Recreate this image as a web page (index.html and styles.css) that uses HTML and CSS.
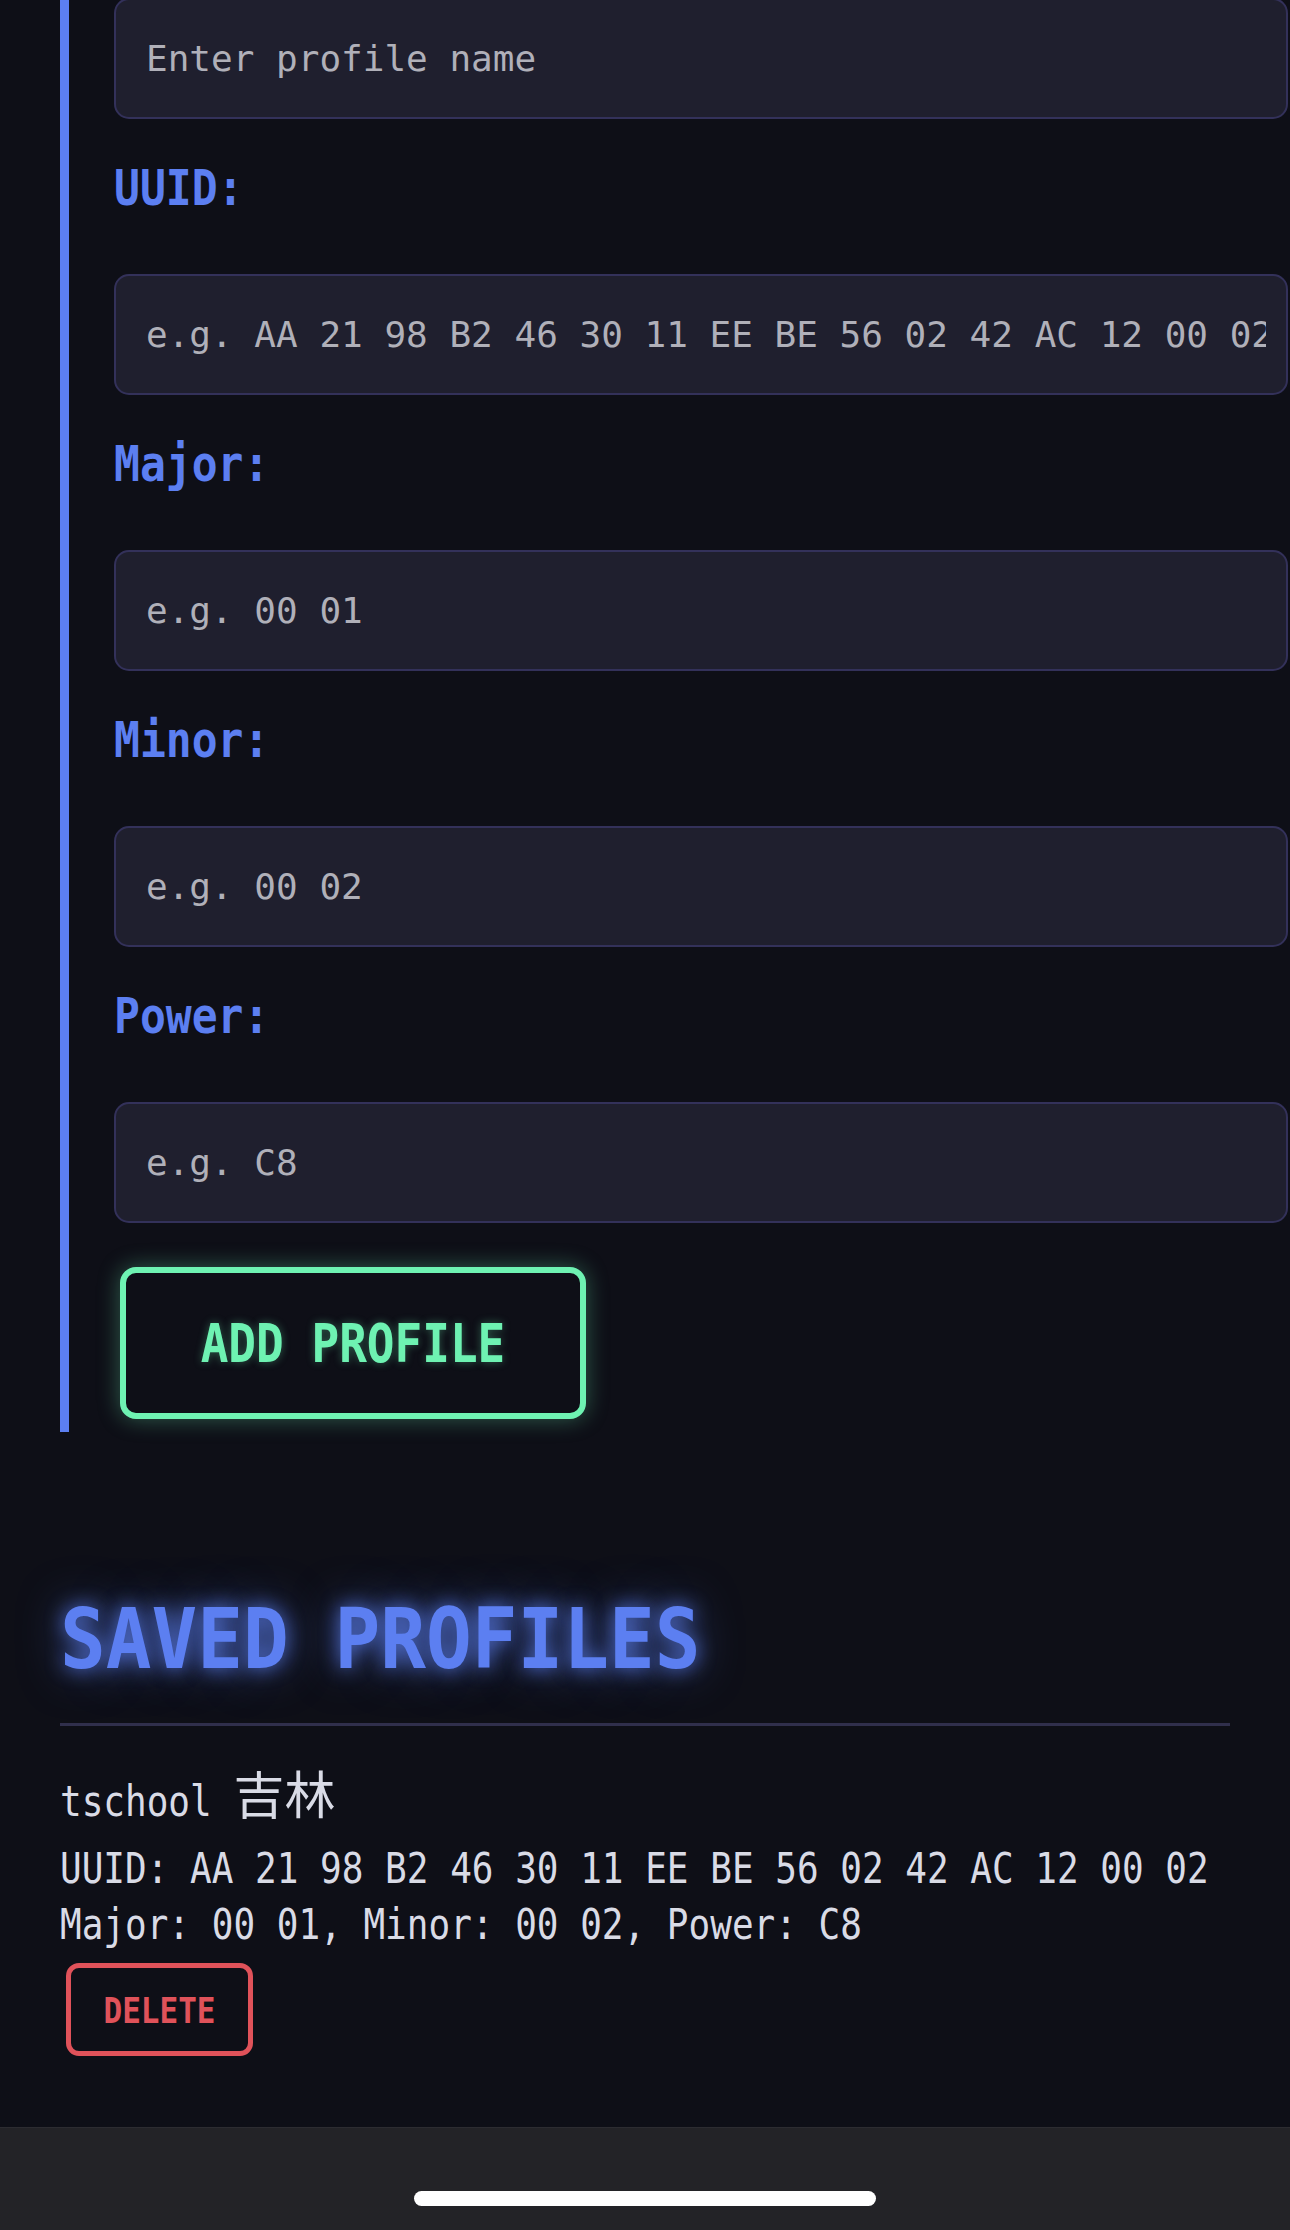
FILE: index.html
```html
<!DOCTYPE html>
<html lang="en">
<head>
<meta charset="utf-8">
<title>Beacon Profiles</title>
<link rel="stylesheet" href="styles.css">
</head>
<body>
<div class="page">
  <main class="content">
    <form class="profile-form">
      <input class="field" type="text" placeholder="Enter profile name">
      <label class="field-label">UUID:</label>
      <input class="field" type="text" placeholder="e.g. AA 21 98 B2 46 30 11 EE BE 56 02 42 AC 12 00 02">
      <label class="field-label">Major:</label>
      <input class="field" type="text" placeholder="e.g. 00 01">
      <label class="field-label">Minor:</label>
      <input class="field" type="text" placeholder="e.g. 00 02">
      <label class="field-label">Power:</label>
      <input class="field" type="text" placeholder="e.g. C8">
      <button class="btn-add" type="button"><span class="tall">ADD PROFILE</span></button>
    </form>

    <h2 class="section-title">SAVED PROFILES</h2>
    <hr class="divider">

    <section class="profile">
      <div class="profile-name"><span class="tall">tschool</span> <span class="cjk">吉林</span></div>
      <div class="profile-line">UUID: AA 21 98 B2 46 30 11 EE BE 56 02 42 AC 12 00 02</div>
      <div class="profile-line">Major: 00 01, Minor: 00 02, Power: C8</div>
      <button class="btn-delete" type="button"><span class="tall">DELETE</span></button>
    </section>
  </main>
  <div class="homebar"><div class="home-indicator"></div></div>
</div>
</body>
</html>
```

FILE: styles.css
```css
html, body {
  margin: 0;
  padding: 0;
  background: #0e0f17;
}

body {
  font-family: "DejaVu Sans Mono", "Noto Sans CJK SC", monospace;
  color: #d9dbe6;
  overflow: hidden;
}

.page {
  min-height: 2230px;
  display: flex;
  flex-direction: column;
}

.content {
  padding: 0 60px;
}

.tall {
  display: inline-block;
  transform: scaleY(1.17);
}

.profile-form {
  display: flex;
  flex-direction: column;
  align-items: flex-start;
  margin-top: -2px;
  border-left: 9px solid #5c7ff1;
  padding-left: 45px;
  padding-bottom: 13px;
}

.field {
  box-sizing: border-box;
  width: calc(100% + 58px);
  height: 121px;
  margin: 0;
  padding: 0 20px 0 30px;
  background: #1f1f2e;
  border: 2px solid #33315a;
  border-radius: 15px;
  font-family: "DejaVu Sans Mono", monospace;
  font-size: 36px;
  color: #d9dbe6;
  outline: none;
}

.field::placeholder {
  color: #b0b0b9;
  opacity: 1;
}

.field-label {
  display: block;
  margin: 40px 0 59px;
  font-size: 43px;
  line-height: 56px;
  font-weight: bold;
  color: #5c7ff1;
  transform: scaleY(1.17);
  transform-origin: left center;
}

.btn-add {
  box-sizing: border-box;
  width: 466px;
  height: 152px;
  margin: 44px 0 0 6px;
  background: #0e0f17;
  border: 6px solid #6ef2b2;
  border-radius: 16px;
  color: #6ef2b2;
  font-family: "DejaVu Sans Mono", monospace;
  font-size: 46px;
  font-weight: bold;
  box-shadow: 0 0 22px rgba(110, 242, 178, 0.35);
  text-shadow: 0 0 8px rgba(110, 242, 178, 0.35);
  padding: 0;
}

.section-title {
  margin: 162px 0 0;
  font-size: 76px;
  line-height: 90px;
  font-weight: bold;
  color: #5c7ff1;
  transform: scaleY(1.1);
  transform-origin: left center;
  text-shadow: 0 0 18px rgba(92, 127, 241, 0.9), 0 0 44px rgba(92, 127, 241, 0.55);
}

.divider {
  margin: 39px 0 0;
  border: 0;
  height: 3px;
  background: #302f4c;
}

.profile {
  display: flex;
  flex-direction: column;
  align-items: flex-start;
}

.profile-name {
  margin-top: 46px;
  font-size: 36px;
  line-height: 60px;
  color: #d9dbe6;
}

.cjk {
  font-family: "Noto Sans CJK SC", sans-serif;
  font-size: 51px;
  line-height: 0;
}

.profile-line {
  font-size: 36px;
  line-height: 56px;
  color: #d9dbe6;
  transform: scaleY(1.17);
  transform-origin: left center;
}

.profile-name + .profile-line {
  margin-top: 9px;
}

.btn-delete {
  box-sizing: border-box;
  width: 187px;
  height: 93px;
  margin: 10px 0 0 6px;
  padding: 0;
  background: transparent;
  border: 5px solid #e0525a;
  border-radius: 13px;
  color: #e0525a;
  font-family: "DejaVu Sans Mono", monospace;
  font-size: 31px;
  font-weight: bold;
}

.homebar {
  margin-top: auto;
  height: 103px;
  box-sizing: border-box;
  background: #232327;
  border-top: 1px solid #2c2c31;
  display: flex;
  justify-content: center;
  padding-top: 63px;
}

.home-indicator {
  width: 462px;
  height: 15px;
  border-radius: 8px;
  background: #ffffff;
}
```
